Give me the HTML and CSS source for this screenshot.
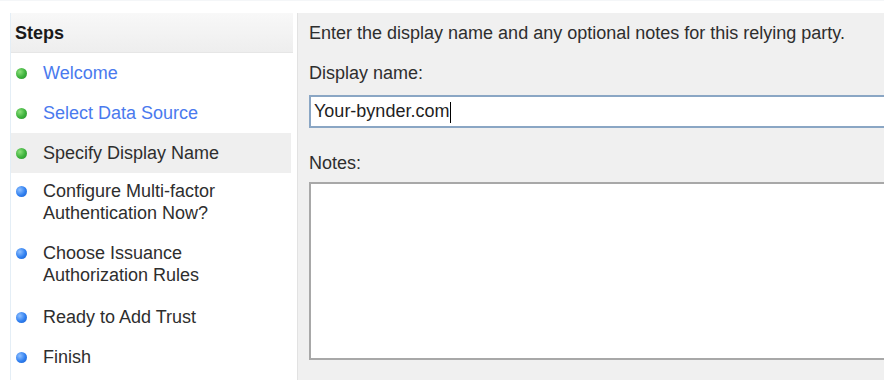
FILE: index.html
```html
<!DOCTYPE html>
<html>
<head>
<meta charset="utf-8">
<link rel="stylesheet" href="styles.css">
</head>
<body>
<div class="window">
  <aside class="steps">
    <div class="steps-head">Steps</div>
    <ul class="step-list">
      <li class="step done link"><span class="dot green"></span><span>Welcome</span></li>
      <li class="step done link"><span class="dot green"></span><span>Select Data Source</span></li>
      <li class="step current"><span class="dot green"></span><span>Specify Display Name</span></li>
      <li class="step two"><span class="dot blue"></span><span>Configure Multi-factor<br>Authentication Now?</span></li>
      <li class="step two"><span class="dot blue"></span><span>Choose Issuance<br>Authorization Rules</span></li>
      <li class="step"><span class="dot blue"></span><span>Ready to Add Trust</span></li>
      <li class="step"><span class="dot blue"></span><span>Finish</span></li>
    </ul>
  </aside>
  <main class="panel">
    <p class="intro">Enter the display name and any optional notes for this relying party.</p>
    <label class="label label-name">Display name:</label>
    <div class="input">Your-bynder.com<span class="caret"></span></div>
    <label class="label label-notes">Notes:</label>
    <div class="textarea"></div>
  </main>
</div>
</body>
</html>
```
FILE: styles.css
```css
html, body {
  margin: 0;
  padding: 0;
  background: #ffffff;
}
body {
  width: 884px;
  height: 380px;
  overflow: hidden;
  font-family: "Liberation Sans", Arial, sans-serif;
  font-size: 18px;
  color: #2e2e2e;
}
.window {
  display: flex;
  gap: 4px;
  padding: 12px 0 0 10px;
  height: 380px;
  border-top: 1px solid #f4f6f8;
  box-sizing: border-box;
}
.steps {
  width: 282px;
  flex: none;
  border-left: 1px solid #e4eef6;
  background: #fff;
}
.steps-head {
  height: 40px;
  line-height: 40px;
  padding-left: 4px;
  font-weight: bold;
  font-size: 18px;
  color: #1a1a1a;
  background: linear-gradient(#f8f8f8, #eeeeee);
  border-bottom: 1px solid #e6e6e6;
  box-sizing: border-box;
}
.step-list {
  list-style: none;
  margin: 0;
  padding: 0;
}
.step {
  display: flex;
  align-items: flex-start;
  gap: 16px;
  padding: 9px 0 9px 5px;
  line-height: 22px;
  margin-right: 2px;
}
.step.two {
  padding-top: 7px;
  padding-bottom: 11px;
}
.step.current {
  background: #efefef;
}
.step.link {
  color: #4a7aee;
}
.dot {
  width: 11px;
  height: 11px;
  border-radius: 50%;
  margin-top: 6px;
  flex: none;
}
.dot.green {
  background: radial-gradient(circle at 35% 35%, #8be07a, #3bb03b 55%, #2b8f2b);
}
.dot.blue {
  background: radial-gradient(circle at 35% 35%, #8fc0ff, #2f7ff0 55%, #1f5fc8);
}
.panel {
  flex: 1;
  background: #f0f0f0;
  border-left: 1px solid #e2e2e2;
  padding: 9px 0 0 11px;
  overflow: hidden;
  min-width: 0;
}
.intro {
  margin: 0;
  line-height: 22px;
  white-space: nowrap;
}
.label {
  display: block;
  line-height: 22px;
}
.label-name {
  margin-top: 18px;
}
.input {
  margin-top: 11px;
  width: 620px;
  height: 33px;
  box-sizing: border-box;
  background: #fff;
  border: 2px solid #8aa6c4;
  border-right: none;
  padding-left: 3px;
  line-height: 29px;
  color: #1f1f1f;
}
.caret {
  display: inline-block;
  width: 1px;
  height: 21px;
  background: #000;
  vertical-align: middle;
  margin-left: 1px;
}
.label-notes {
  margin-top: 24px;
}
.textarea {
  margin-top: 8px;
  width: 620px;
  height: 178px;
  box-sizing: border-box;
  background: #fff;
  border: 2px solid #a8a8a8;
  border-right: none;
}
```
